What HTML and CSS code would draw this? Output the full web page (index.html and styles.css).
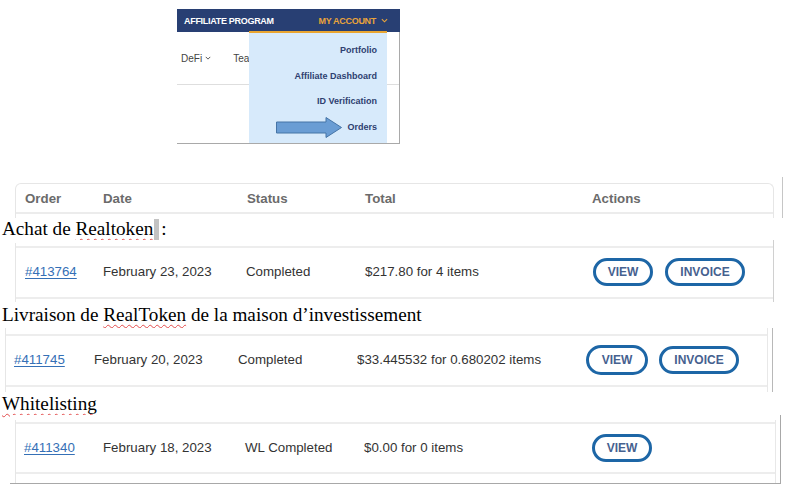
FILE: index.html
```html
<!DOCTYPE html>
<html lang="fr">
<head>
<meta charset="utf-8">
<title>Commandes RealToken</title>
<link rel="stylesheet" href="styles.css">
</head>
<body>
<div class="page">

  <div class="nav-shot">
    <div class="nav-bar">
      <span class="nav-brand">AFFILIATE PROGRAM</span>
      <span class="nav-account">MY ACCOUNT
        <svg class="chev chev-orange" viewBox="0 0 8 5"><polyline points="1,1 4,4 7,1"/></svg>
      </span>
    </div>
    <div class="nav-sub">
      <span class="sub-item">DeFi <svg class="chev chev-gray" viewBox="0 0 8 5"><polyline points="1,1 4,4 7,1"/></svg></span>
      <span class="sub-item">Team</span>
    </div>
    <ul class="dropdown">
      <li>Portfolio</li>
      <li>Affiliate Dashboard</li>
      <li>ID Verification</li>
      <li>Orders</li>
    </ul>
    <svg class="arrow" viewBox="0 0 67 23" width="67" height="23">
      <path d="M0.5 6 H50 V1.5 L65.5 11.5 L50 21.5 V17 H0.5 Z"/>
    </svg>
  </div>

  <div class="frag frag-head">
    <div class="tbl tbl-head">
      <div class="hrow cols-a">
        <span>Order</span><span>Date</span><span>Status</span><span>Total</span><span>Actions</span>
      </div>
    </div>
  </div>

  <p class="doc-line l1">Achat de <span class="spell">Realtoken</span><span class="sel"></span>:</p>

  <div class="frag frag-r1">
    <div class="tbl tbl-r1">
      <div class="row cols-b">
        <a class="order-link" href="#">#413764</a>
        <span>February 23, 2023</span>
        <span>Completed</span>
        <span>$217.80 for 4 items</span>
        <span class="actions"><span class="btn btn-view">VIEW</span><span class="btn btn-invoice">INVOICE</span></span>
      </div>
    </div>
  </div>

  <p class="doc-line l2">Livraison de <span class="spell">RealToken</span> de la maison d’investissement</p>

  <div class="frag frag-r2">
    <div class="tbl tbl-r2">
      <div class="row cols-c">
        <a class="order-link" href="#">#411745</a>
        <span>February 20, 2023</span>
        <span>Completed</span>
        <span>$33.445532 for 0.680202 items</span>
        <span class="actions"><span class="btn btn-view btn-view2">VIEW</span><span class="btn btn-invoice">INVOICE</span></span>
      </div>
    </div>
  </div>

  <p class="doc-line l3"><span class="spell">Whitelisting</span></p>

  <div class="frag frag-r3">
    <div class="tbl tbl-r3">
      <div class="row cols-d">
        <a class="order-link" href="#">#411340</a>
        <span>February 18, 2023</span>
        <span>WL Completed</span>
        <span>$0.00 for 0 items</span>
        <span class="actions"><span class="btn btn-view">VIEW</span></span>
      </div>
    </div>
  </div>

</div>
</body>
</html>
```

FILE: styles.css
```css
* { box-sizing: border-box; }

html, body {
  margin: 0;
  padding: 0;
  background: #ffffff;
}

body {
  width: 787px;
  height: 496px;
  overflow: hidden;
  font-family: "Liberation Sans", Arial, sans-serif;
  color: #333333;
}

.page {
  display: flex;
  flex-direction: column;
  align-items: flex-start;
}

/* ---------- navigation screenshot ---------- */
.nav-shot {
  position: relative;
  margin: 9px 0 0 177px;
  width: 223px;
  height: 135px;
  border-right: 1px solid #a9a9a9;
  border-bottom: 1px solid #a9a9a9;
  background: #ffffff;
}

.nav-bar {
  height: 23px;
  margin-right: -1px;
  background: #283f73;
  display: flex;
  align-items: center;
  justify-content: space-between;
  padding: 0 12px 0 7px;
  font-weight: bold;
  font-size: 9px;
  letter-spacing: -0.3px;
}

.nav-brand { color: #ffffff; }

.nav-account {
  color: #eaa43a;
  display: flex;
  align-items: center;
  gap: 5px;
}

.chev {
  width: 7px;
  height: 5px;
  fill: none;
  stroke-width: 1.3;
}
.chev-orange { stroke: #eaa43a; }
.chev-gray { stroke: #555555; width: 6px; height: 4px; margin-left: 3px; }

.nav-sub {
  height: 53px;
  border-bottom: 1px solid #dedede;
  display: flex;
  align-items: center;
  gap: 22px;
  padding-left: 4px;
  font-size: 10px;
  color: #444444;
}

.sub-item {
  display: flex;
  align-items: center;
}

.dropdown {
  position: absolute;
  left: 72px;
  top: 22px;
  bottom: 0;
  width: 138px;
  margin: 0;
  padding: 5px 10px 0 0;
  list-style: none;
  background: #d7eafb;
  border-top: 2px solid #e9a531;
  text-align: right;
  font-weight: bold;
  font-size: 9px;
  line-height: 25.5px;
  color: #2e4070;
}

.arrow {
  position: absolute;
  left: 99px;
  top: 107px;
  fill: #6a9dd4;
  stroke: #4574a6;
  stroke-width: 1;
}

/* ---------- word document lines ---------- */
.doc-line {
  margin: 0;
  padding-left: 2px;
  font-family: "Liberation Serif", "Times New Roman", serif;
  font-size: 19.2px;
  color: #000000;
  white-space: nowrap;
  width: 787px;
  background: #ffffff;
}
.l1 { height: 22px; line-height: 22px; }
.l2 { height: 26px; line-height: 26px; }
.l3 { height: 23px; line-height: 22px; padding-top: 1px; }

.spell {
  text-decoration: underline wavy #e24b4b;
  text-decoration-thickness: 1px;
  text-underline-offset: 3px;
  text-decoration-skip-ink: none;
}

.sel {
  display: inline-block;
  width: 5px;
  height: 21px;
  margin: 0 2px 0 1px;
  background: #c3c3c3;
  vertical-align: -5px;
}

/* ---------- table fragments ---------- */
.frag { background: #ffffff; }

.frag-head {
  margin-top: 33px;
  width: 783px;
  height: 41px;
  padding-top: 6px;
  border-right: 1px solid #c6c6c6;
}

.tbl-head {
  margin-left: 15px;
  width: 759px;
  height: 35px;
  border: 1px solid #e6e6e6;
  border-bottom: 0;
  border-radius: 6px 6px 0 0;
}

.hrow {
  display: grid;
  align-items: center;
  height: 30px;
  border-bottom: 2px solid #ececec;
  font-weight: bold;
  font-size: 13.3px;
  color: #6b6b6b;
}

.row {
  display: grid;
  align-items: center;
  border-top: 2px solid #ededed;
  border-bottom: 2px solid #ededed;
  font-size: 13.3px;
  color: #333333;
}

.cols-a { grid-template-columns: 78px 144px 118px 227px 1fr; padding-left: 9px; }
.cols-b { grid-template-columns: 78px 143px 119px 228px 1fr; padding-left: 9px; }
.cols-c { grid-template-columns: 80px 144px 119px 229px 1fr; padding-left: 8px; }
.cols-d { grid-template-columns: 79px 142px 119px 228px 1fr; padding-left: 8px; }

.frag-r1 {
  width: 774px;
  height: 62px;
  padding-top: 3px;
  border-right: 1px solid #d0d0d0;
}
.tbl-r1 {
  margin-left: 15px;
  height: 59px;
  padding-top: 3px;
  border-left: 1px solid #e6e6e6;
}
.tbl-r1 .row { height: 53px; padding-bottom: 2px; }

.frag-r2 {
  width: 773px;
  height: 64px;
  border-right: 1px solid #b8b8b8;
}
.tbl-r2 {
  margin-left: 5px;
  width: 763px;
  height: 64px;
  padding-top: 6px;
  border-left: 1px solid #e6e6e6;
  border-right: 1px solid #e8e8e8;
}
.tbl-r2 .row { height: 53px; padding-bottom: 2px; }

.frag-r3 {
  margin-left: 10px;
  width: 771px;
  height: 69px;
  padding-top: 5px;
  border-right: 1px solid #a8a8a8;
  border-bottom: 1px solid #a8a8a8;
}
.tbl-r3 {
  margin-left: 5px;
  width: 761px;
  height: 63px;
  padding-top: 2px;
  border-left: 1px solid #e6e6e6;
  border-right: 1px solid #e8e8e8;
}
.tbl-r3 .row { height: 52px; padding-bottom: 1px; }

.order-link {
  color: #3570b6;
  text-decoration: underline;
  text-underline-offset: 2px;
}

.actions {
  display: flex;
  align-items: center;
  gap: 12px;
}

.btn {
  display: inline-flex;
  align-items: center;
  justify-content: center;
  height: 28px;
  border: 3px solid #1d66a6;
  border-radius: 14px;
  background: #ffffff;
  color: #46618f;
  font-weight: bold;
  font-size: 12px;
}
.btn-view { width: 60px; }
.btn-view2 { width: 62px; height: 30px; border-radius: 15px; }
.btn-invoice { width: 80px; }
.tbl-r2 .actions { gap: 11px; }
```
